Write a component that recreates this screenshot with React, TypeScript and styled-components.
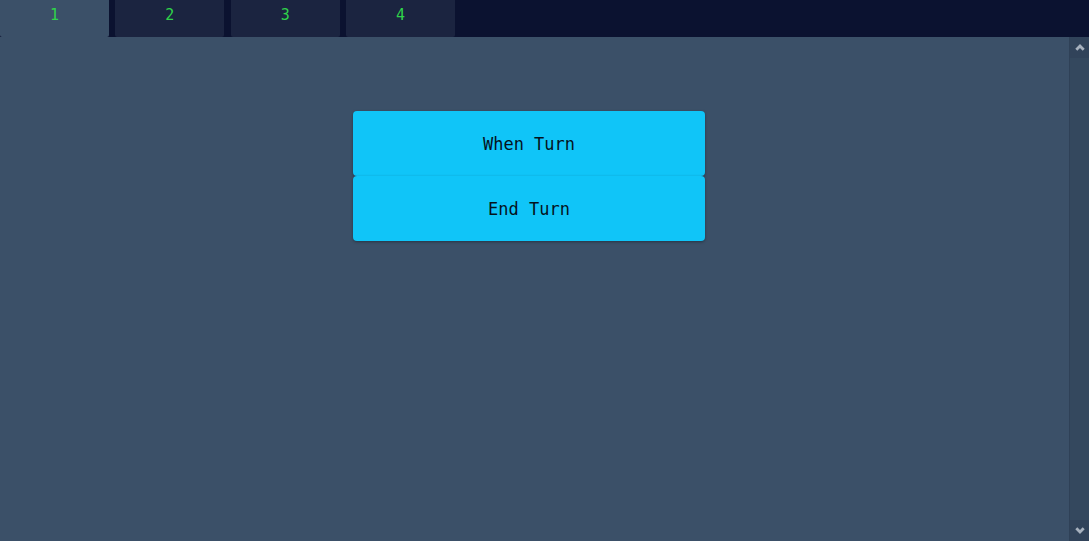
import React from "react";
import styled, { createGlobalStyle } from "styled-components";

const Global = createGlobalStyle`
  html, body { margin: 0; padding: 0; height: 100%; overflow: hidden; }
  body { background: #3b5068; font-family: "DejaVu Sans Mono", monospace; }
  #root { height: 100%; }
`;

const Shell = styled.div`
  width: 1089px;
  height: 541px;
  display: flex;
  flex-direction: column;
  background: #3b5068;
`;

const TabBar = styled.div`
  height: 37px;
  flex: none;
  display: flex;
  gap: 6.333px;
  background: #0b1230;
`;

const Tab = styled.div<{ $active?: boolean }>`
  width: 109px;
  height: 37px;
  display: flex;
  justify-content: center;
  padding-top: 6px;
  box-sizing: border-box;
  background: ${(p) => (p.$active ? "#3b5068" : "#1b2440")};
  border-radius: 0 0 2px 2px;
  color: #2fd34a;
  font-family: "DejaVu Sans Mono", monospace;
  font-size: 15px;
  line-height: 18px;
`;

const Body = styled.div`
  flex: 1;
  display: flex;
  min-height: 0;
`;

const Content = styled.div`
  flex: 1;
  display: flex;
  flex-direction: column;
  align-items: flex-start;
  padding: 74px 0 0 353px;
`;

const ActionButton = styled.button`
  width: 352px;
  height: 65px;
  padding: 1px 0 0;
  border: none;
  border-radius: 4px;
  background: #10c5f8;
  color: #05131c;
  font-family: "DejaVu Sans Mono", monospace;
  font-size: 17px;
  box-shadow: 0 1px 3px rgba(0, 0, 0, 0.35);
  cursor: pointer;
`;

const ScrollBar = styled.div`
  width: 19px;
  flex: none;
  display: flex;
  flex-direction: column;
  background: #34485e;
  border-left: 1px solid #2f4157;
`;

const ScrollButton = styled.div`
  height: 21px;
  display: flex;
  align-items: center;
  justify-content: center;
  background: #31435a;
`;

const Track = styled.div`
  flex: 1;
`;

const Chevron = ({ down }: { down?: boolean }) => (
  <svg width="10" height="7" viewBox="0 0 10 7">
    <path
      d={down ? "M1.3 1.3 L5 5 L8.7 1.3" : "M1.3 5.7 L5 2 L8.7 5.7"}
      fill="none"
      stroke="#a7b1be"
      strokeWidth="2.8"
    />
  </svg>
);

export default function App() {
  return (
    <>
      <Global />
      <Shell>
        <TabBar>
          <Tab $active>1</Tab>
          <Tab>2</Tab>
          <Tab>3</Tab>
          <Tab>4</Tab>
        </TabBar>
        <Body>
          <Content>
            <ActionButton>When Turn</ActionButton>
            <ActionButton>End Turn</ActionButton>
          </Content>
          <ScrollBar>
            <ScrollButton>
              <Chevron />
            </ScrollButton>
            <Track />
            <ScrollButton>
              <Chevron down />
            </ScrollButton>
          </ScrollBar>
        </Body>
      </Shell>
    </>
  );
}
